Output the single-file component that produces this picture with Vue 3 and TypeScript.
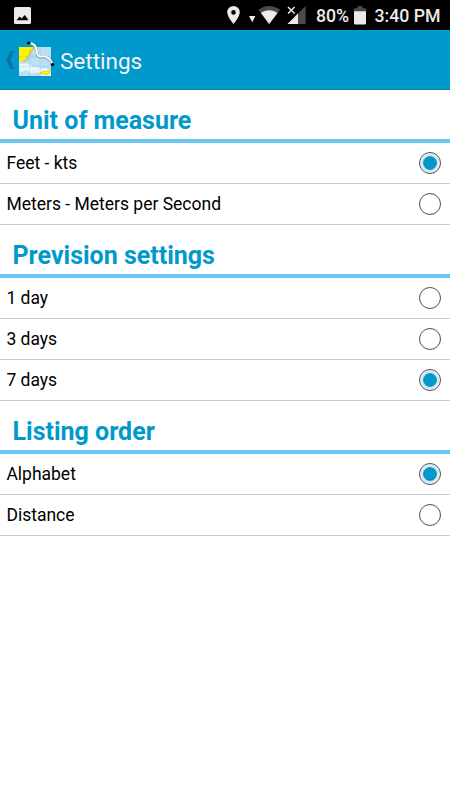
<script setup lang="ts">
import { reactive } from 'vue'

interface Section {
  id: string
  title: string
  options: string[]
}

const sections: Section[] = [
  { id: 'unit', title: 'Unit of measure', options: ['Feet - kts', 'Meters - Meters per Second'] },
  { id: 'prevision', title: 'Prevision settings', options: ['1 day', '3 days', '7 days'] },
  { id: 'order', title: 'Listing order', options: ['Alphabet', 'Distance'] },
]

const selected = reactive<Record<string, string>>({
  unit: 'Feet - kts',
  prevision: '7 days',
  order: 'Alphabet',
})
</script>

<template>
  <div class="screen">
    <div class="status">
      <svg class="picture" width="17" height="17" viewBox="0 0 17 17">
        <rect width="17" height="17" rx="1.6" fill="#ebebeb" />
        <path d="M2.5 13.2 5.7 9.4l1.9 2.2L10.8 8l3.8 5.2z" fill="#000" />
      </svg>
      <svg class="signals" width="92" height="30" viewBox="0 0 92 30">
        <path fill-rule="evenodd" fill="#ebebeb" d="M6.5 6A6.3 6.3 0 0 0 .2 12.3C.2 17 6.5 24 6.5 24s6.3-7 6.3-11.7A6.3 6.3 0 0 0 6.5 6zm0 4.1a2.3 2.3 0 1 1 0 4.6 2.3 2.3 0 0 1 0-4.6z" />
        <path d="M22 16h6.4l-3.2 6.3z" fill="#ebebeb" />
        <path d="M31.4 9.8C37.8 4.7 46.6 4.7 53 9.8L42.2 24z" fill="#4a4a4a" />
        <path d="M33.9 13.1c5-3.8 11.6-3.8 16.6 0L42.2 24z" fill="#ebebeb" />
        <path d="M78.6 6v18H60.5z" fill="#4a4a4a" />
        <path d="M71 13.6V24H60.5z" fill="#ebebeb" />
        <path d="m60.8 6.8 7 7m0-7-7 7" stroke="#000" stroke-width="4" />
        <path d="m61 7 6.6 6.6m0-6.6L61 13.6" stroke="#ebebeb" stroke-width="1.4" />
      </svg>
      <span class="charge">80%</span>
      <svg class="battery" width="12" height="19" viewBox="0 0 12 19">
        <path d="M0 2.2h3.6V0h4.8v2.2H12V6H0z" fill="#4a4a4a" />
        <path d="M0 5.2h12v12.2q0 1-1 1H1q-1 0-1-1z" fill="#ebebeb" />
      </svg>
      <span class="time">3:40 PM</span>
    </div>

    <header class="bar">
      <svg class="back" width="9" height="18" viewBox="0 0 9 18">
        <path d="M4.7 0H8.4L4.2 9l4.2 9H4.7L.1 9z" fill="#0676a0" />
      </svg>
      <svg class="logo" width="37" height="38" viewBox="0 0 37 38">
        <rect x="1.3" y="6.5" width="32.2" height="29.5" fill="#257c9e" opacity=".5" />
        <rect x="1" y="6" width="32" height="29" fill="#b9e0f4" />
        <path d="M1 6h14.8l-1 3-2.2 1-.2 3.4-3.2 2.2-.4 3.3-4 1.7H1z" fill="#fff203" />
        <path d="m15.8 6-1 3-2.2 1-.2 3.4-3.2 2.2-.4 3.3-4 1.7" fill="none" stroke="#d0a323" stroke-width=".9" />
        <path d="M1 23.5c3-2 5 .2 7-1s4 1.8 6 2.8 5-.5 7 1.3 6 0 8 1.2 3 .6 4 1.4V35h-9l-5-3.5-6 .5-5-3-4 2-3-1z" fill="#e9f7fd" />
        <path d="m20.5 32.4 5-2.2h3.6l3.4-1.4-.7 2.2-1.8 2.7-5-.7z" fill="#fff203" stroke="#c9b62c" stroke-width=".5" />
        <path d="M11.6 6v29M22.3 6v29M1 15.8h32M1 25.4h32" stroke="#7bbddb" stroke-width=".6" opacity=".55" />
        <path d="M8 19.5c3.5-4.2 8-5.8 12.2-3.4 4 1.8 8-.2 11.8 3.3" fill="none" stroke="#a3cade" stroke-width="1.4" />
        <path d="M11 2.4c4.5.2 7.4 3.2 7.9 8.7.4 3.2 1.3 4.5 3.2 4.7 5.6-1.2 10.3 2 12.2 7.4" fill="none" stroke="#7093a5" stroke-width="2.8" />
        <path d="M11 2.1c4.5.2 7.4 3.2 7.9 8.7.4 3.2 1.3 4.5 3.2 4.7 5.6-1.2 10.3 2 12.2 7.2" fill="none" stroke="#f9fbfb" stroke-width="2" />
        <ellipse cx="10.8" cy="2.1" rx="1.9" ry="1.4" fill="#000" />
        <ellipse cx="34.5" cy="23.6" rx="1.7" ry="1.5" fill="#000" />
      </svg>
      <h1>Settings</h1>
    </header>

    <section v-for="s in sections" :key="s.id">
      <h2>{{ s.title }}</h2>
      <div v-for="o in s.options" :key="o" class="row" @click="selected[s.id] = o">
        <span>{{ o }}</span>
        <svg width="24" height="24" viewBox="0 0 24 24">
          <defs>
            <radialGradient :id="'glow-' + s.id">
              <stop offset=".5" stop-color="#8bd6f5" />
              <stop offset=".95" stop-color="#f1fbff" />
            </radialGradient>
          </defs>
          <circle cx="12" cy="12" r="10.5" stroke="#505050" stroke-width="1" :fill="selected[s.id] === o ? `url(#glow-${s.id})` : '#fff'" />
          <circle v-if="selected[s.id] === o" cx="12" cy="12" r="6.3" fill="#0099cc" stroke="#247797" stroke-width=".9" />
        </svg>
      </div>
    </section>
  </div>
</template>

<style>
body {
  background: #fff;
}
</style>

<style scoped>
.screen {
  width: 450px;
  height: 800px;
  overflow: hidden;
  background: #fff;
  font-family: Roboto, sans-serif;
  color: #000;
}
.status {
  display: flex;
  align-items: center;
  height: 30px;
  background: #000;
  color: #ebebeb;
  font-size: 17.7px;
  font-weight: 500;
  line-height: 30px;
}
.picture {
  margin-left: 14px;
}
.signals {
  margin-left: 196px;
}
.charge {
  width: 35px;
  margin-top: 2px;
  margin-left: -3px;
  white-space: nowrap;
}
.battery {
  margin-top: 1px;
  margin-left: 3px;
}
.time {
  margin-top: 2px;
  margin-left: 8.5px;
  white-space: nowrap;
}
.bar {
  display: flex;
  align-items: center;
  box-sizing: border-box;
  height: 60px;
  background: #0099cc;
  border-bottom: 1px solid #0083b4;
}
.back {
  margin-left: 5.5px;
}
.logo {
  margin-left: 3.5px;
}
h1 {
  margin: 3px 0 0 5px;
  color: #f3f3f3;
  font-size: 22.5px;
  font-weight: 400;
}
h2 {
  box-sizing: border-box;
  height: 52.6px;
  margin: 0;
  padding: 13px 0 0 12.5px;
  color: #0099cc;
  font-size: 25px;
  font-weight: 700;
  line-height: 36px;
  border-bottom: 4px solid #6bc7f2;
}
.row {
  display: flex;
  align-items: center;
  justify-content: space-between;
  box-sizing: border-box;
  height: 41.2px;
  padding: 0 8px 0 6.4px;
  font-size: 17.5px;
  border-bottom: 1px solid #cacaca;
}
</style>
